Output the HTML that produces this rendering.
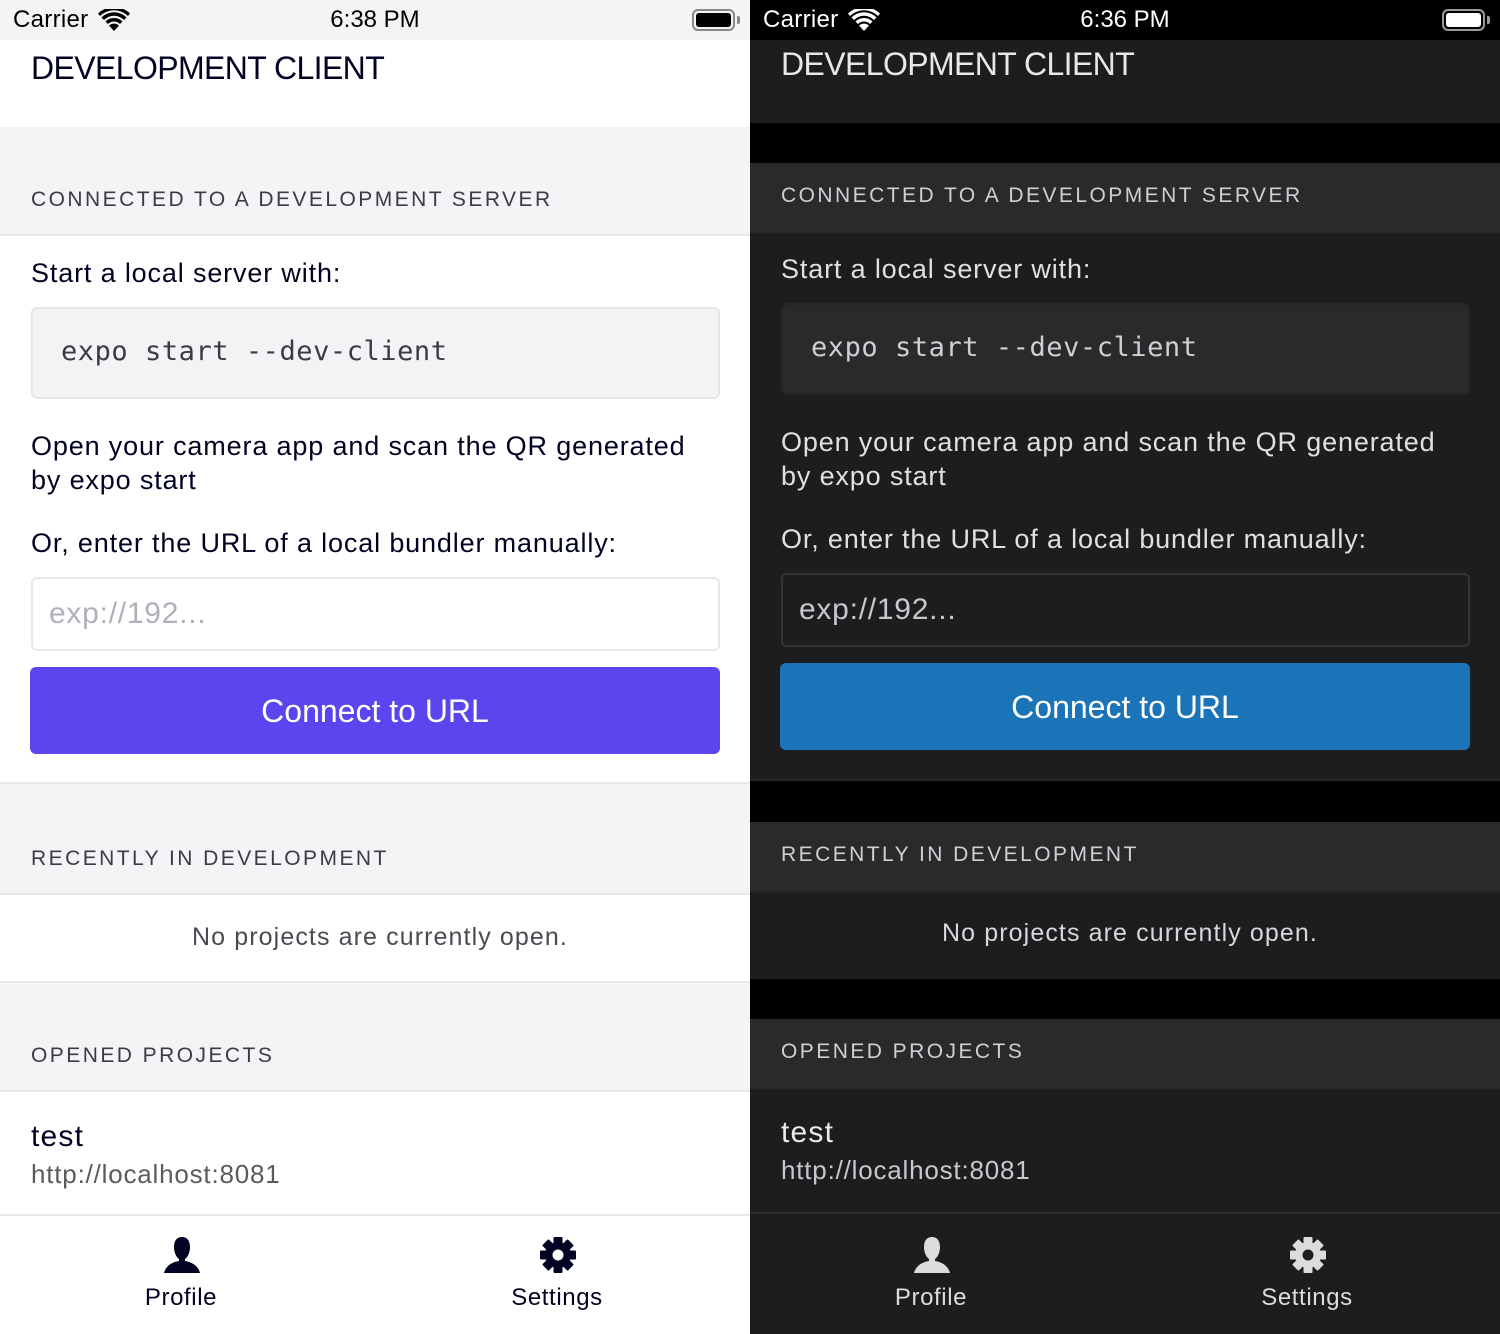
<!DOCTYPE html>
<html><head><meta charset="utf-8">
<style>
*{margin:0;padding:0;box-sizing:border-box}
body{width:1500px;height:1334px;position:relative;overflow:hidden;font-family:"Liberation Sans",Arial,sans-serif}
.p{position:absolute;top:0;width:750px;height:1334px;overflow:hidden}
.a{position:absolute}
.t{position:absolute;white-space:nowrap}
.lab{font-size:21px;letter-spacing:2.45px}
.b{font-size:27px;line-height:34px;letter-spacing:0.85px}
.ttl{font-size:32px;line-height:40px;letter-spacing:-0.6px}
.mono{font-family:"DejaVu Sans Mono","Liberation Mono",monospace;letter-spacing:0.55px}
.tab{font-size:24px;line-height:30px;letter-spacing:0.6px}
</style></head><body>

<!-- LIGHT -->
<div class="p" style="left:0;background:#f4f4f6">
  <div class="t" style="left:13px;top:6px;font-size:24px;line-height:28px;color:#000;letter-spacing:0.3px">Carrier</div>
  <svg class="a" style="left:98px;top:9px" width="32" height="22" viewBox="0 0 32 22"><path d="M16 22 L11 16.5 A7.5 7.5 0 0 1 21 16.5Z M7.5 12.5 A12 12 0 0 1 24.5 12.5 L22 15 A8.5 8.5 0 0 0 10 15Z M3.5 8.5 A17.5 17.5 0 0 1 28.5 8.5 L26 11 A14 14 0 0 0 6 11Z M0 4.5 A23 23 0 0 1 32 4.5 L30 7 A20 20 0 0 0 2 7Z" fill="#000"/></svg>
  <div class="t" style="left:0;width:750px;text-align:center;top:6px;font-size:24px;line-height:28px;color:#000">6:38 PM</div>
  <div class="a" style="left:692px;top:9px;width:43px;height:22px;border:2px solid #888;border-radius:6px;padding:2px"><div style="width:100%;height:100%;background:#000;border-radius:3px"></div></div>
  <div class="a" style="left:737px;top:16px;width:3px;height:8px;background:#888;border-radius:0 2px 2px 0"></div>

  <div class="a" style="left:0;top:40px;width:750px;height:87px;background:#fff"></div>
  <div class="t ttl" style="left:31px;top:48px;color:#020322">DEVELOPMENT CLIENT</div>

  <div class="t lab" style="left:31px;top:187px;line-height:26px;color:#3b3b45">CONNECTED TO A DEVELOPMENT SERVER</div>
  <div class="a" style="left:0;top:234px;width:750px;height:550px;background:#fff;border-top:2px solid #e8e8ec;border-bottom:2px solid #e8e8ec"></div>
  <div class="t b" style="left:31px;top:256px;color:#020322">Start a local server with:</div>
  <div class="a" style="left:31px;top:307px;width:689px;height:92px;background:#f3f3f5;border:2px solid #e6e6ea;border-radius:6px"></div>
  <div class="t mono" style="left:61px;top:335px;font-size:27px;line-height:34px;color:#3a3a44">expo start --dev-client</div>
  <div class="t b" style="left:31px;top:429px;color:#020322">Open your camera app and scan the QR generated</div>
  <div class="t b" style="left:31px;top:463px;color:#020322">by expo start</div>
  <div class="t b" style="left:31px;top:526px;color:#020322">Or, enter the URL of a local bundler manually:</div>
  <div class="a" style="left:31px;top:577px;width:689px;height:74px;background:#fff;border:2px solid #e8e8ec;border-radius:6px"></div>
  <div class="t" style="left:49px;top:596px;font-size:30px;line-height:36px;color:#b0b0ba;letter-spacing:0.75px">exp://192...</div>
  <div class="a" style="left:30px;top:667px;width:690px;height:87px;background:#5b45ee;border-radius:6px"></div>
  <div class="t" style="left:30px;width:690px;text-align:center;top:691px;font-size:32px;line-height:40px;color:#fff">Connect to URL</div>

  <div class="t lab" style="left:31px;top:846px;line-height:26px;color:#3b3b45">RECENTLY IN DEVELOPMENT</div>
  <div class="a" style="left:0;top:893px;width:750px;height:90px;background:#fff;border-top:2px solid #e8e8ec;border-bottom:2px solid #e8e8ec"></div>
  <div class="t" style="left:0;width:760px;text-align:center;top:921px;font-size:25px;line-height:32px;color:#4a4a52;letter-spacing:1.1px">No projects are currently open.</div>

  <div class="t lab" style="left:31px;top:1043px;line-height:26px;color:#3b3b45">OPENED PROJECTS</div>
  <div class="a" style="left:0;top:1090px;width:750px;height:244px;background:#fff;border-top:2px solid #e8e8ec"></div>
  <div class="t" style="left:31px;top:1119px;font-size:30px;line-height:36px;color:#020322;letter-spacing:1.2px">test</div>
  <div class="t" style="left:31px;top:1158px;font-size:26px;line-height:32px;color:#5a5a60;letter-spacing:0.8px">http://localhost:8081</div>
  <div class="a" style="left:0;top:1214px;width:750px;height:2px;background:#e8e8ec"></div>
  <svg class="a" style="left:163px;top:1236px" width="38" height="38" viewBox="0 0 38 38"><path d="M19 1C13 1 11 6 11 11C11 16 13 21 16 23L16 25C10 26 3 29 1 37L37 37C35 29 28 26 22 25L22 23C25 21 27 16 27 11C27 6 25 1 19 1Z" fill="#020322"/></svg>
  <svg class="a" style="left:540px;top:1237px" width="36" height="36" viewBox="-18 -18 36 36"><g fill="#020322"><circle r="13"/><rect x="-4.5" y="-18" width="9" height="36" rx="1"/><rect x="-4.5" y="-18" width="9" height="36" rx="1" transform="rotate(45)"/><rect x="-4.5" y="-18" width="9" height="36" rx="1" transform="rotate(90)"/><rect x="-4.5" y="-18" width="9" height="36" rx="1" transform="rotate(135)"/></g><circle r="5.5" fill="#fff"/></svg>
  <div class="t tab" style="left:81px;width:200px;text-align:center;top:1283px;color:#020322">Profile</div>
  <div class="t tab" style="left:457px;width:200px;text-align:center;top:1283px;color:#020322">Settings</div>
</div>

<!-- DARK -->
<div class="p" style="left:750px;background:#000">
  <div class="t" style="left:13px;top:6px;font-size:24px;line-height:28px;color:#fff;letter-spacing:0.3px">Carrier</div>
  <svg class="a" style="left:98px;top:9px" width="32" height="22" viewBox="0 0 32 22"><path d="M16 22 L11 16.5 A7.5 7.5 0 0 1 21 16.5Z M7.5 12.5 A12 12 0 0 1 24.5 12.5 L22 15 A8.5 8.5 0 0 0 10 15Z M3.5 8.5 A17.5 17.5 0 0 1 28.5 8.5 L26 11 A14 14 0 0 0 6 11Z M0 4.5 A23 23 0 0 1 32 4.5 L30 7 A20 20 0 0 0 2 7Z" fill="#fff"/></svg>
  <div class="t" style="left:0;width:750px;text-align:center;top:6px;font-size:24px;line-height:28px;color:#fff">6:36 PM</div>
  <div class="a" style="left:692px;top:9px;width:43px;height:22px;border:2px solid #999;border-radius:6px;padding:2px"><div style="width:100%;height:100%;background:#fff;border-radius:3px"></div></div>
  <div class="a" style="left:737px;top:16px;width:3px;height:8px;background:#999;border-radius:0 2px 2px 0"></div>

  <div class="a" style="left:0;top:40px;width:750px;height:83px;background:#1d1d1f"></div>
  <div class="t ttl" style="left:31px;top:44px;color:#e8e8ea">DEVELOPMENT CLIENT</div>

  <div class="a" style="left:0;top:163px;width:750px;height:69px;background:#2a2a2c"></div>
  <div class="t lab" style="left:31px;top:183px;line-height:26px;color:#d0d0d4">CONNECTED TO A DEVELOPMENT SERVER</div>
  <div class="a" style="left:0;top:231px;width:750px;height:550px;background:#1d1d1f;border-top:2px solid #262628;border-bottom:2px solid #262628"></div>
  <div class="t b" style="left:31px;top:252px;color:#e0e0e2">Start a local server with:</div>
  <div class="a" style="left:31px;top:303px;width:689px;height:92px;background:#2a2a2c;border:2px solid #252527;border-radius:6px"></div>
  <div class="t mono" style="left:61px;top:331px;font-size:27px;line-height:34px;color:#d0d0d4">expo start --dev-client</div>
  <div class="t b" style="left:31px;top:425px;color:#e0e0e2">Open your camera app and scan the QR generated</div>
  <div class="t b" style="left:31px;top:459px;color:#e0e0e2">by expo start</div>
  <div class="t b" style="left:31px;top:522px;color:#e0e0e2">Or, enter the URL of a local bundler manually:</div>
  <div class="a" style="left:31px;top:573px;width:689px;height:74px;background:#1d1d1f;border:2px solid #333336;border-radius:6px"></div>
  <div class="t" style="left:49px;top:592px;font-size:30px;line-height:36px;color:#c8c8cc;letter-spacing:0.75px">exp://192...</div>
  <div class="a" style="left:30px;top:663px;width:690px;height:87px;background:#1b73b8;border-radius:6px"></div>
  <div class="t" style="left:30px;width:690px;text-align:center;top:687px;font-size:32px;line-height:40px;color:#fff">Connect to URL</div>

  <div class="a" style="left:0;top:822px;width:750px;height:69px;background:#2a2a2c"></div>
  <div class="t lab" style="left:31px;top:842px;line-height:26px;color:#d0d0d4">RECENTLY IN DEVELOPMENT</div>
  <div class="a" style="left:0;top:890px;width:750px;height:89px;background:#1d1d1f;border-top:2px solid #262628"></div>
  <div class="t" style="left:0;width:760px;text-align:center;top:917px;font-size:25px;line-height:32px;color:#d8d8dc;letter-spacing:1.1px">No projects are currently open.</div>

  <div class="a" style="left:0;top:1019px;width:750px;height:69px;background:#2a2a2c"></div>
  <div class="t lab" style="left:31px;top:1039px;line-height:26px;color:#d0d0d4">OPENED PROJECTS</div>
  <div class="a" style="left:0;top:1087px;width:750px;height:247px;background:#1d1d1f;border-top:2px solid #262628"></div>
  <div class="t" style="left:31px;top:1115px;font-size:30px;line-height:36px;color:#eaeaec;letter-spacing:1.2px">test</div>
  <div class="t" style="left:31px;top:1154px;font-size:26px;line-height:32px;color:#c8c8cc;letter-spacing:0.8px">http://localhost:8081</div>
  <div class="a" style="left:0;top:1212px;width:750px;height:2px;background:#2a2a2c"></div>
  <svg class="a" style="left:163px;top:1236px" width="38" height="38" viewBox="0 0 38 38"><path d="M19 1C13 1 11 6 11 11C11 16 13 21 16 23L16 25C10 26 3 29 1 37L37 37C35 29 28 26 22 25L22 23C25 21 27 16 27 11C27 6 25 1 19 1Z" fill="#dcdcde"/></svg>
  <svg class="a" style="left:540px;top:1237px" width="36" height="36" viewBox="-18 -18 36 36"><g fill="#dcdcde"><circle r="13"/><rect x="-4.5" y="-18" width="9" height="36" rx="1"/><rect x="-4.5" y="-18" width="9" height="36" rx="1" transform="rotate(45)"/><rect x="-4.5" y="-18" width="9" height="36" rx="1" transform="rotate(90)"/><rect x="-4.5" y="-18" width="9" height="36" rx="1" transform="rotate(135)"/></g><circle r="5.5" fill="#1d1d1f"/></svg>
  <div class="t tab" style="left:81px;width:200px;text-align:center;top:1283px;color:#dcdcde">Profile</div>
  <div class="t tab" style="left:457px;width:200px;text-align:center;top:1283px;color:#dcdcde">Settings</div>
</div>
</body></html>
